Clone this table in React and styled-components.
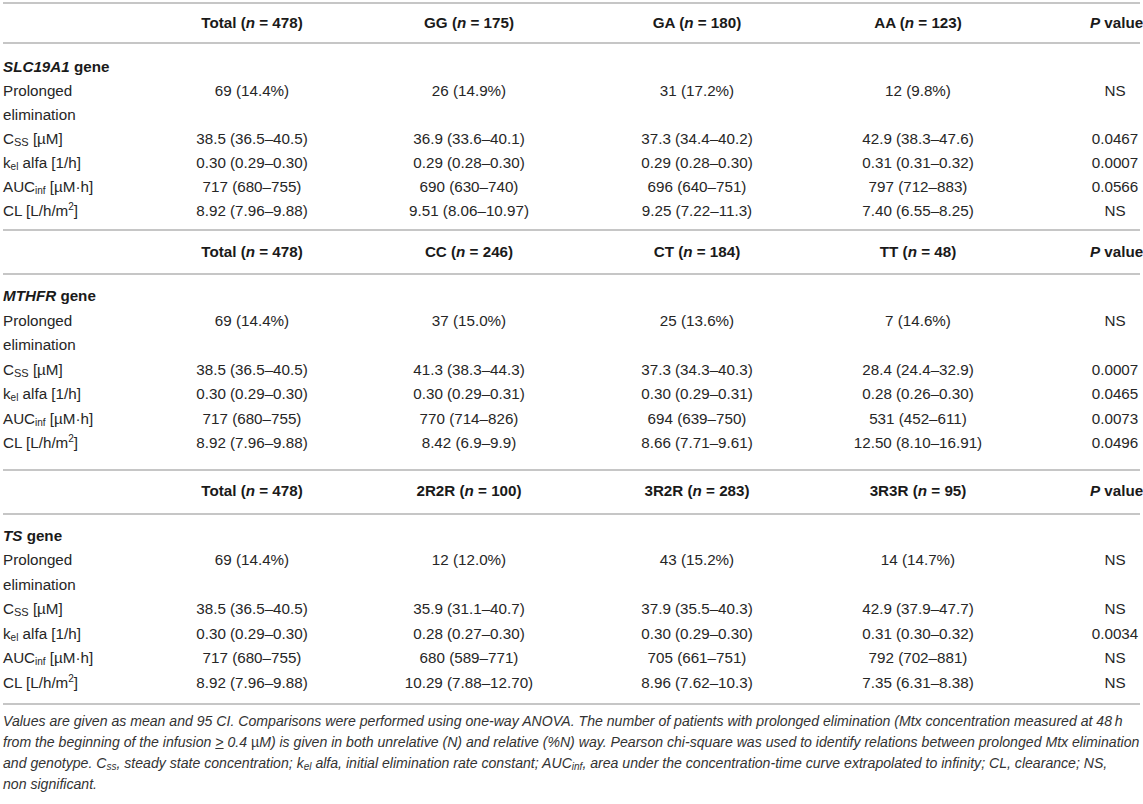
import React from 'react'
import styled, {createGlobalStyle} from 'styled-components'

const Global = createGlobalStyle`
  html, body {
    margin: 0;
    padding: 0;
    background: #fff;
  }
  body {
    font-family: "Liberation Sans", Arial, Helvetica, sans-serif;
    color: #262626;
  }
`

const Page = styled.div`
  padding: 2px 3px 0;
  width: 1137px;
`

const Section = styled.section`
  border-top: 2px solid #c6c6c6;
`

const Row = styled.div`
  display: grid;
  grid-template-columns: 137px 224px 210px 246px 196px 1fr;
  align-items: start;
  font-size: 15.2px;
  line-height: ${p => p.$lh || 24.5}px;
`

const HeadRow = styled(Row)`
  height: ${p => p.$h}px;
  align-items: center;
  font-weight: bold;
  color: #1a1a1a;
  border-bottom: 2px solid #c6c6c6;
`

const Body = styled.div`
  padding: ${p => p.$pt}px 0 ${p => p.$pb}px;
`

const Label = styled.div`
  padding-right: 8px;
`

const Cell = styled.div`
  text-align: center;
  white-space: nowrap;
`

const PCell = styled.div`
  justify-self: end;
  width: 50px;
  text-align: center;
  white-space: nowrap;
`

const Gene = styled.div`
  grid-column: 1 / -1;
  font-weight: bold;
  color: #1a1a1a;
`

const Sub = styled.sub`
  font-size: ${p => p.$size || 10}px;
  vertical-align: -2px;
  line-height: 0;
`

const Sup = styled.sup`
  font-size: 10px;
  vertical-align: 6px;
  line-height: 0;
`

const Note = styled.div`
  padding-top: 6px;
  font-size: 14.1px;
  line-height: 21px;
  font-style: italic;
  color: #333;
`

const NoteLine = styled.span`
  display: block;
  white-space: nowrap;
`

const Upright = styled.span`
  font-style: normal;
`

const labels = [
  'Prolonged elimination',
  <>C<Sub $size={11}>SS</Sub> [µM]</>,
  <>k<Sub>el</Sub> alfa [1/h]</>,
  <>AUC<Sub>inf</Sub> [µM·h]</>,
  <>CL [L/h/m<Sup>2</Sup>]</>,
]

const sections = [
  {
    gene: 'SLC19A1',
    groups: ['GG', 'GA', 'AA'],
    ns: ['478', '175', '180', '123'],
    rows: [
      ['69 (14.4%)', '26 (14.9%)', '31 (17.2%)', '12 (9.8%)', 'NS'],
      ['38.5 (36.5–40.5)', '36.9 (33.6–40.1)', '37.3 (34.4–40.2)', '42.9 (38.3–47.6)', '0.0467'],
      ['0.30 (0.29–0.30)', '0.29 (0.28–0.30)', '0.29 (0.28–0.30)', '0.31 (0.31–0.32)', '0.0007'],
      ['717 (680–755)', '690 (630–740)', '696 (640–751)', '797 (712–883)', '0.0566'],
      ['8.92 (7.96–9.88)', '9.51 (8.06–10.97)', '9.25 (7.22–11.3)', '7.40 (6.55–8.25)', 'NS'],
    ],
    headH: 38,
    lh: 24,
    pt: 11,
    pb: 6,
  },
  {
    gene: 'MTHFR',
    groups: ['CC', 'CT', 'TT'],
    ns: ['478', '246', '184', '48'],
    rows: [
      ['69 (14.4%)', '37 (15.0%)', '25 (13.6%)', '7 (14.6%)', 'NS'],
      ['38.5 (36.5–40.5)', '41.3 (38.3–44.3)', '37.3 (34.3–40.3)', '28.4 (24.4–32.9)', '0.0007'],
      ['0.30 (0.29–0.30)', '0.30 (0.29–0.31)', '0.30 (0.29–0.31)', '0.28 (0.26–0.30)', '0.0465'],
      ['717 (680–755)', '770 (714–826)', '694 (639–750)', '531 (452–611)', '0.0073'],
      ['8.92 (7.96–9.88)', '8.42 (6.9–9.9)', '8.66 (7.71–9.61)', '12.50 (8.10–16.91)', '0.0496'],
    ],
    headH: 42,
    lh: 24.5,
    pt: 9,
    pb: 13,
  },
  {
    gene: 'TS',
    groups: ['2R2R', '3R2R', '3R3R'],
    ns: ['478', '100', '283', '95'],
    rows: [
      ['69 (14.4%)', '12 (12.0%)', '43 (15.2%)', '14 (14.7%)', 'NS'],
      ['38.5 (36.5–40.5)', '35.9 (31.1–40.7)', '37.9 (35.5–40.3)', '42.9 (37.9–47.7)', 'NS'],
      ['0.30 (0.29–0.30)', '0.28 (0.27–0.30)', '0.30 (0.29–0.30)', '0.31 (0.30–0.32)', '0.0034'],
      ['717 (680–755)', '680 (589–771)', '705 (661–751)', '792 (702–881)', 'NS'],
      ['8.92 (7.96–9.88)', '10.29 (7.88–12.70)', '8.96 (7.62–10.3)', '7.35 (6.31–8.38)', 'NS'],
    ],
    headH: 42,
    lh: 24.5,
    pt: 9,
    pb: 8,
  },
]

const GeneSection = ({s}) => (
  <Section>
    <HeadRow $h={s.headH}>
      <div />
      <Cell>Total (<i>n</i> = {s.ns[0]})</Cell>
      {s.groups.map((g, i) => (
        <Cell key={g}>{g} (<i>n</i> = {s.ns[i + 1]})</Cell>
      ))}
      <PCell><i>P</i> value</PCell>
    </HeadRow>
    <Body $pt={s.pt} $pb={s.pb}>
      <Row $lh={s.lh}>
        <Gene><i>{s.gene}</i> gene</Gene>
      </Row>
      {s.rows.map((r, i) => (
        <Row key={i} $lh={s.lh}>
          <Label>{labels[i]}</Label>
          {r.slice(0, 4).map((v, j) => <Cell key={j}>{v}</Cell>)}
          <PCell>{r[4]}</PCell>
        </Row>
      ))}
    </Body>
  </Section>
)

export default function App() {
  return (
    <Page>
      <Global />
      {sections.map(s => <GeneSection key={s.gene} s={s} />)}
      <Section>
        <Note>
          <NoteLine>
            Values are given as mean and 95 CI. Comparisons were performed using one-way ANOVA. The number of patients
            with prolonged elimination (Mtx concentration measured at 48{'\u2009'}h
          </NoteLine>
          <NoteLine>
            from the beginning of the infusion <u>&gt;</u> 0.4 <Upright>µ</Upright>M) is given in both unrelative (N) and
            relative (%N) way. Pearson chi-square was used to identify relations between prolonged Mtx elimination
          </NoteLine>
          <NoteLine>
            and genotype. C<Sub>ss</Sub>, steady state concentration; k<Sub>el</Sub> alfa, initial elimination rate
            constant; AUC<Sub>inf</Sub>, area under the concentration-time curve extrapolated to infinity; CL, clearance; NS,
          </NoteLine>
          <NoteLine>non significant.</NoteLine>
        </Note>
      </Section>
    </Page>
  )
}
